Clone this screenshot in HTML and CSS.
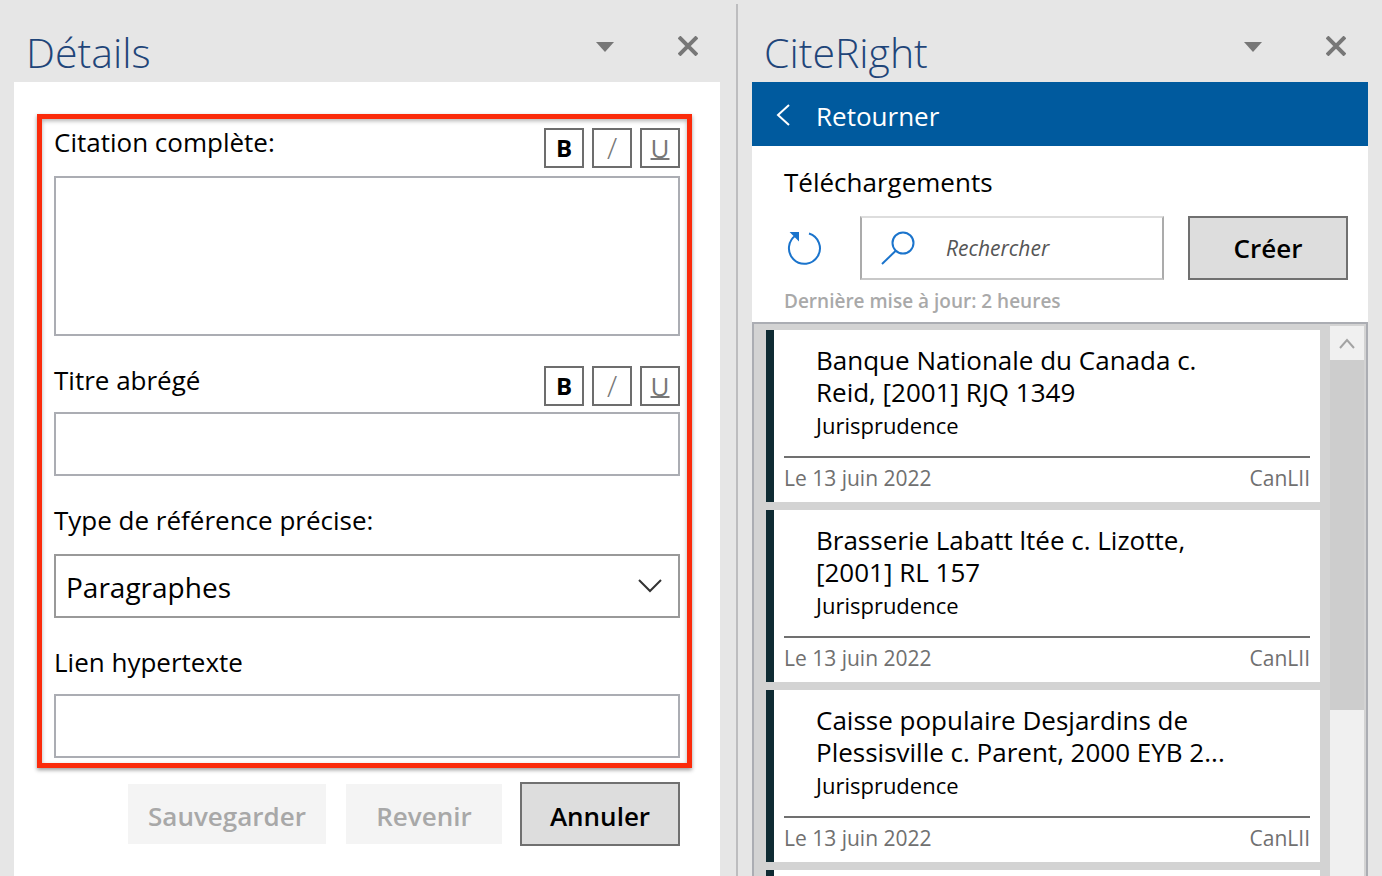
FILE: index.html
```html
<!DOCTYPE html>
<html lang="fr">
<head>
    <meta charset="UTF-8">
    <title>CiteRight</title>
    <link rel="stylesheet" href="styles.css">
</head>
<body>
    <section class="pane pane-details">
        <header class="pane-header">
            <h1 class="pane-title">Détails</h1>
            <button class="pane-button" aria-label="Options">
                <svg width="20" height="20" viewBox="0 0 20 20"><path d="M1 6h18l-9 10z"/></svg>
            </button>
            <button class="pane-button" aria-label="Fermer">
                <svg width="20" height="20" viewBox="0 0 20 20"><path class="close-icon" d="M1 1l18 18M19 1L1 19"/></svg>
            </button>
        </header>
        <form class="details">
            <div class="fields">
                <div class="field-head">
                    <label for="citation">Citation complète:</label>
                    <div class="format-buttons">
                        <button type="button" class="format bold">B</button>
                        <button type="button" class="format italic">/</button>
                        <button type="button" class="format underline">U</button>
                    </div>
                </div>
                <textarea class="box citation" id="citation"></textarea>
                <div class="field-head short">
                    <label for="titre">Titre abrégé</label>
                    <div class="format-buttons">
                        <button type="button" class="format bold">B</button>
                        <button type="button" class="format italic">/</button>
                        <button type="button" class="format underline">U</button>
                    </div>
                </div>
                <input class="box" id="titre" type="text">
                <label class="field-label" for="type">Type de référence précise:</label>
                <div class="select-wrap">
                    <select class="box" id="type">
                        <option>Paragraphes</option>
                    </select>
                    <svg class="chevron" width="26" height="14" viewBox="0 0 26 14"><path d="M2 1l11 11L24 1"/></svg>
                </div>
                <label class="field-label" for="lien">Lien hypertexte</label>
                <input class="box" id="lien" type="text">
            </div>
            <div class="actions">
                <button type="button" class="button save" disabled>Sauvegarder</button>
                <button type="button" class="button revert" disabled>Revenir</button>
                <button type="button" class="button">Annuler</button>
            </div>
        </form>
    </section>

    <section class="pane pane-citeright">
        <header class="pane-header">
            <h1 class="pane-title">CiteRight</h1>
            <button class="pane-button" aria-label="Options">
                <svg width="20" height="20" viewBox="0 0 20 20"><path d="M1 6h18l-9 10z"/></svg>
            </button>
            <button class="pane-button" aria-label="Fermer">
                <svg width="20" height="20" viewBox="0 0 20 20"><path class="close-icon" d="M1 1l18 18M19 1L1 19"/></svg>
            </button>
        </header>
        <button class="back">
            <svg width="14" height="24" viewBox="0 0 14 24"><path d="M13 2L2 12l11 10"/></svg>
            <span>Retourner</span>
        </button>
        <div class="toolbar">
            <h2 class="toolbar-title">Téléchargements</h2>
            <div class="toolbar-row">
                <button class="refresh" aria-label="Actualiser">
                    <svg width="40" height="36" viewBox="0 0 40 36"><path d="M25 3.500a15.500 15.500 0 1 1-12.500 1.500"/><path class="arrow-head" d="M8 3h6v6z"/></svg>
                </button>
                <label class="search">
                    <svg width="36" height="36" viewBox="0 0 36 36"><circle cx="23" cy="13" r="10.500"/><path d="M16 20.500L2 34"/></svg>
                    <input type="text" placeholder="Rechercher" aria-label="Rechercher">
                </label>
                <button class="button">Créer</button>
            </div>
            <p class="updated">Dernière mise à jour: 2 heures</p>
        </div>
        <div class="list">
            <div class="cards">
                <article class="card">
                    <h3>Banque Nationale du Canada c.<br>Reid, [2001] RJQ 1349</h3>
                    <p class="kind">Jurisprudence</p>
                    <footer><span>Le 13 juin 2022</span><span>CanLII</span></footer>
                </article>
                <article class="card">
                    <h3>Brasserie Labatt ltée c. Lizotte,<br>[2001] RL 157</h3>
                    <p class="kind">Jurisprudence</p>
                    <footer><span>Le 13 juin 2022</span><span>CanLII</span></footer>
                </article>
                <article class="card">
                    <h3>Caisse populaire Desjardins de<br>Plessisville c. Parent, 2000 EYB 2...</h3>
                    <p class="kind">Jurisprudence</p>
                    <footer><span>Le 13 juin 2022</span><span>CanLII</span></footer>
                </article>
                <article class="card"></article>
            </div>
            <div class="scrollbar">
                <button class="scroll-up" aria-label="Monter">
                    <svg width="16" height="12" viewBox="0 0 16 12"><path d="M1 11l7-8 7 8"/></svg>
                </button>
                <div class="thumb"></div>
            </div>
        </div>
    </section>
</body>
</html>
```
FILE: styles.css
```css
* {
    box-sizing: border-box;
}

body {
    margin: 0;
    height: 100vh;
    display: grid;
    grid-template-columns: 738fr 644fr;
    overflow: hidden;
    background: #e6e6e6;
    color: #000;
    font-family: "Open Sans", "Noto Sans", sans-serif;
    font-size: 26px;
    line-height: 32px;
}

h1, h2, h3, p {
    margin: 0;
    font-weight: 400;
}

button, input, select, textarea {
    margin: 0;
    font: inherit;
    color: inherit;
    border-radius: 0;
}

svg {
    display: block;
    flex: none;
}

/* Panes */
.pane {
    display: flex;
    flex-direction: column;
    min-width: 0;
    min-height: 0;
}

.pane-details {
    margin-top: 4px;
    padding: 0 16px 0 14px;
    border-right: 2px solid #bdbdbf;
}

.pane-citeright {
    padding: 4px 14px 0;
}

.pane-header {
    display: flex;
    align-items: center;
    flex: none;
    height: 78px;
    padding: 6px 22px 0 12px;
}

.pane-title {
    flex: 1;
    padding-top: 12px;
    color: #1f4579;
    font-size: 41px;
    font-weight: 300;
    line-height: 48px;
}

.pane-button {
    padding: 0;
    border: none;
    background: none;
}

.pane-button + .pane-button {
    margin-left: 63px;
}

.pane-button svg {
    fill: #777;
}

.pane-button .close-icon {
    stroke: #777;
    stroke-width: 4;
}

/* Details form */
.details {
    flex: 1;
    padding: 32px 28px 0 23px;
    background: #fff;
}

.fields {
    display: flex;
    flex-direction: column;
    padding: 9px 7px 5px 12px;
    border: 5px solid #fb2b0b;
    box-shadow: 0 2px 4px rgba(0, 0, 0, 0.4), inset 0 2px 4px rgba(0, 0, 0, 0.3);
}

.field-head {
    display: flex;
    justify-content: space-between;
    margin-bottom: 8px;
    line-height: 28px;
}

.field-head.short {
    margin: 30px 0 6px;
}

.format-buttons {
    display: flex;
    gap: 8px;
}

.format {
    width: 40px;
    height: 40px;
    padding: 0;
    border: 2px solid #6d6d6d;
    background: #fff;
    color: #777;
    font-size: 26px;
    line-height: 36px;
}

.format.bold {
    color: #000;
    font-size: 24px;
    font-weight: 700;
}

.format.italic {
    font-size: 30px;
    font-weight: 300;
}

.format.underline {
    text-decoration: underline 2px;
    text-underline-offset: 0;
    text-decoration-skip-ink: none;
}

.box {
    display: block;
    width: 100%;
    height: 64px;
    padding: 0 10px;
    border: 2px solid #abadb3;
    background: #fff;
}

.citation {
    height: 160px;
    resize: none;
}

.field-label {
    margin: 28px 0 18px;
}

.select-wrap {
    position: relative;
}

.select-wrap .box {
    appearance: none;
    padding-top: 2px;
    border-color: #999;
    font-size: 28px;
    line-height: 44px;
}

.chevron {
    position: absolute;
    top: 25px;
    right: 17px;
    fill: none;
    stroke: #333;
    stroke-width: 2;
    pointer-events: none;
}

.select-wrap + .field-label {
    margin-bottom: 16px;
}

.actions {
    display: flex;
    justify-content: flex-end;
    align-items: center;
    padding: 14px 12px 0 0;
}

.button {
    width: 160px;
    height: 64px;
    padding: 0;
    border: 2px solid #707070;
    background: #ddd;
    font-weight: 600;
}

.actions .button {
    padding-top: 4px;
}

.button:disabled {
    height: 60px;
    border: none;
    background: #f4f4f4;
    color: #a8a8a8;
}

.save {
    width: 198px;
    margin-right: 20px;
}

.revert {
    width: 156px;
    margin-right: 18px;
}

/* CiteRight pane */
.back {
    display: flex;
    align-items: center;
    gap: 26px;
    flex: none;
    height: 64px;
    padding: 2px 24px 0;
    border: none;
    background: #005a9e;
    color: #fff;
}

.back span {
    padding-top: 2px;
}

.back svg {
    fill: none;
    stroke: #fff;
    stroke-width: 2;
}

.toolbar {
    flex: none;
    padding: 20px 20px 4px 32px;
    background: #fff;
}

.toolbar-title {
    font-size: 26px;
}

.toolbar-row {
    display: flex;
    align-items: center;
    margin: 18px 0 4px;
}

.refresh {
    margin-right: 36px;
    padding: 0;
    border: none;
    background: none;
}

.refresh svg,
.search svg {
    fill: none;
    stroke: #1b74cc;
    stroke-width: 2;
}

.refresh .arrow-head {
    fill: #1b74cc;
}

.search {
    display: flex;
    align-items: center;
    flex: 1;
    min-width: 0;
    height: 64px;
    margin-right: 24px;
    padding-left: 18px;
    border: 2px solid #ababab;
    border-top-color: #ddd;
    border-bottom-color: #c8c8c8;
}

.search input {
    flex: 1;
    min-width: 0;
    padding: 0 0 0 30px;
    border: none;
    outline: none;
    background: none;
    font-size: 21px;
    font-style: italic;
}

.search input::placeholder {
    color: #555;
}

.updated {
    color: #a9a9a9;
    font-size: 19px;
    font-weight: 600;
    line-height: 34px;
}

/* Downloads list */
.list {
    display: flex;
    flex: 1;
    min-height: 0;
    border: 2px solid #abadb3;
    border-bottom: none;
    background: #d3d3d3;
    overflow: hidden;
}

.cards {
    flex: 1;
    min-width: 0;
    padding: 6px 10px 0 12px;
}

.card {
    height: 172px;
    margin-bottom: 8px;
    padding: 14px 10px 0;
    border-left: 8px solid #0f2b33;
    background: #fff;
}

.card h3 {
    padding-left: 32px;
    font-size: 26px;
    white-space: nowrap;
}

.kind {
    padding-left: 32px;
    font-size: 22px;
    line-height: 34px;
}

.card footer {
    display: flex;
    justify-content: space-between;
    margin-top: 14px;
    padding-top: 4px;
    border-top: 2px solid #707070;
    color: #707070;
    font-size: 21px;
}

.scrollbar {
    width: 34px;
    margin: 2px 2px 0 0;
    background: #f0f0f0;
}

.scroll-up {
    display: flex;
    align-items: center;
    justify-content: center;
    width: 34px;
    height: 34px;
    padding: 0;
    border: none;
    background: #f0f0f0;
}

.scroll-up svg {
    fill: none;
    stroke: #a3a3a3;
    stroke-width: 2;
}

.thumb {
    height: 350px;
    background: #cdcdcd;
}
```
